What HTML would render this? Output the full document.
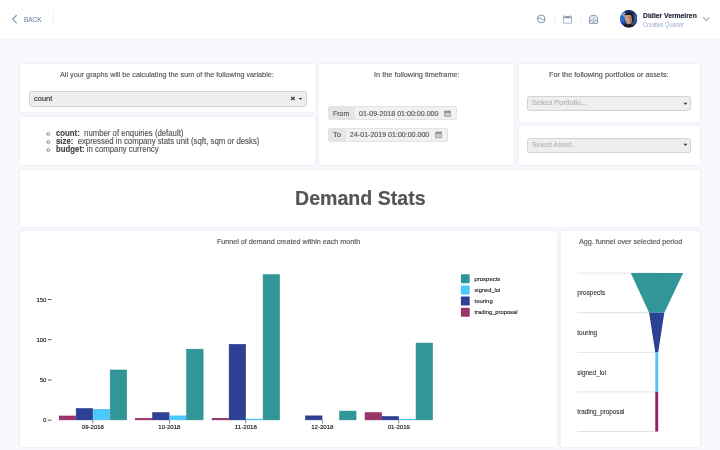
<!DOCTYPE html>
<html><head><meta charset="utf-8">
<style>
*{margin:0;padding:0;box-sizing:border-box}
html,body{width:720px;height:450px;overflow:hidden;background:#f8f9fd;}
body{will-change:transform;-webkit-text-stroke:0.15px currentColor;font-family:"Liberation Sans",sans-serif;color:#555}
.a{position:absolute;white-space:nowrap;transform-origin:0 0}
#hdr{position:absolute;left:0;top:0;width:720px;height:39px;background:#fff;box-shadow:0 0 2px rgba(40,60,90,.06)}
.p{position:absolute;background:#fff;border-radius:2px;box-shadow:0 0 3px rgba(60,70,110,.1)}
.t{font-size:7.4px;color:#555}
.sel{position:absolute;background:#eee;border:0.65px solid #d3d3d3;border-radius:2.5px}
.grp{position:absolute;background:#f1f1f1;border:0.6px solid #e3e3e3;border-radius:2px;overflow:hidden}
.add{position:absolute;left:0;top:0;bottom:0;background:#e5e5e5}
</style></head><body>
<div id="hdr">
  <svg class="a" style="left:11px;top:14px" width="8" height="10" viewBox="0 0 8 10"><path d="M5.7 1.1 L1.6 5.1 L5.7 9.1" fill="none" stroke="#7890a8" stroke-width="1.15"/></svg>
  <div id="tback" class="a" style="left:23.80px;top:16.11px;font-size:7px;color:#7b8fa6;transform:scaleX(0.921)">BACK</div>
  <div class="a" style="left:52.6px;top:11.2px;width:0.7px;height:16.3px;background:#f1f3f6"></div>

  <svg class="a" style="left:536px;top:13.5px" width="11" height="11" viewBox="0 0 11 11"><circle cx="5.25" cy="4.95" r="3.85" fill="none" stroke="#7b8fa6" stroke-width="0.95"/><path d="M1.5 5 C2.8 5 3.4 3.7 4.2 3.7 C5.1 3.7 5.4 6.1 6.3 6.1 C7.2 6.1 7.8 4.9 9 4.9" fill="none" stroke="#7b8fa6" stroke-width="0.9"/></svg>
  <div class="a" style="left:554px;top:14.3px;width:0.6px;height:9.3px;background:#f0f2f5"></div>
  <svg class="a" style="left:562px;top:13.5px" width="11" height="11" viewBox="0 0 11 11"><path d="M1.45 2.6 V9.1 H9.55 V2.6" fill="none" stroke="#9aabbd" stroke-width="0.9"/><rect x="1" y="2.1" width="9" height="2.2" fill="#9aabbd"/><rect x="4" y="2.6" width="3" height="1.3" fill="#6f849c"/><rect x="1.9" y="1.1" width="1.2" height="1.4" fill="#b7c4d2"/><rect x="7.9" y="1.1" width="1.2" height="1.4" fill="#b7c4d2"/></svg>
  <div class="a" style="left:580px;top:14.3px;width:0.6px;height:9.3px;background:#f0f2f5"></div>
  <svg class="a" style="left:588px;top:13.5px" width="11" height="11" viewBox="0 0 11 11"><path d="M2.3 2.4 Q2.6 1.6 3.5 1.6 H7.5 Q8.4 1.6 8.7 2.4 L9.6 5.2 V8.5 Q9.6 9.2 8.9 9.2 H2.1 Q1.4 9.2 1.4 8.5 V5.2 Z" fill="#e9edf2" stroke="#7b8fa6" stroke-width="0.9"/><path d="M1.4 6.6 H3.9 Q4.4 7.8 5.5 7.8 Q6.6 7.8 7.1 6.6 H9.6 V8.5 Q9.6 9.2 8.9 9.2 H2.1 Q1.4 9.2 1.4 8.5Z" fill="#fff" stroke="#7b8fa6" stroke-width="0.9"/><path d="M5.5 3.3 V5.9 M4.5 5 L5.5 6 L6.5 5" fill="none" stroke="#8ea0b4" stroke-width="0.7"/></svg>

  <svg class="a" style="left:619.9px;top:10.4px" width="17.5" height="17.5" viewBox="40 30 375 375">
    <defs><clipPath id="cc"><circle cx="227.5" cy="217.5" r="187.5"/></clipPath>
    <filter id="bl" x="-20%" y="-20%" width="140%" height="140%"><feGaussianBlur stdDeviation="14"/></filter></defs>
    <g clip-path="url(#cc)">
      <rect x="0" y="0" width="500" height="500" fill="#22417c"/>
      <g filter="url(#bl)">
      <ellipse cx="120" cy="140" rx="70" ry="60" fill="#7f9cc2"/>
      <ellipse cx="80" cy="230" rx="60" ry="80" fill="#2a6bd0"/>
      <ellipse cx="100" cy="320" rx="60" ry="40" fill="#1d3fb0"/>
      <ellipse cx="250" cy="60" rx="110" ry="45" fill="#182d5e"/>
      <ellipse cx="370" cy="220" rx="50" ry="90" fill="#2f5a98"/>
      </g>
      <path d="M140 120 Q200 80 290 105 Q330 130 335 200 L330 270 L290 280 L280 150 Z" fill="#241e1c"/>
      <path d="M150 130 Q210 115 272 140 Q292 190 298 250 Q290 310 262 335 L205 338 Q165 300 158 260 Q142 215 145 190 Z" fill="#c8957a"/>
      <path d="M150 150 Q175 140 200 150 L190 260 Q160 250 150 210Z" fill="#d9ac8c" opacity="0.8"/>
      <path d="M152 186 L262 186" stroke="#5a4038" stroke-width="10" opacity="0.5"/>
      <path d="M240 150 Q285 170 296 240 Q290 300 262 335 L240 330 Q270 260 240 150Z" fill="#9c6c58" opacity="0.75"/>
      <path d="M140 125 Q190 85 280 100 Q320 115 320 150 Q270 125 150 140Z" fill="#1e1816"/>
      <path d="M100 420 L130 330 Q200 350 270 330 L340 340 L380 420 Z" fill="#1c1c1f"/>
      <path d="M290 290 L340 320 L330 360 L280 340 Z" fill="#4a5560"/>
    </g>
  </svg>
  <div id="tname" class="a" style="left:643.30px;top:11.21px;font-size:7.2px;font-weight:bold;color:#172030;transform:scaleX(0.941)">Didier Vermeiren</div>
  <div id="tcomp" class="a" style="left:643.30px;top:20.90px;font-size:6.3px;color:#afbfcf;transform:scaleX(0.878)">Creative Quarter</div>
  <svg class="a" style="left:702px;top:16px" width="9" height="6" viewBox="0 0 9 6"><path d="M1.2 1.4 L4.25 4.5 L7.3 1.4" fill="none" stroke="#8fa3b9" stroke-width="1.05"/></svg>
</div>

<!-- row 1 -->
<div class="p" style="left:20px;top:64px;width:294.8px;height:48.4px"></div>
<div id="tall" class="a t" style="left:60.40px;top:69.60px;font-size:7.6px;transform:scaleX(0.952)">All your graphs will be calculating the sum of the following variable:</div>
<div class="sel" style="left:29px;top:91px;width:277.5px;height:16px"></div>
<div id="tcount" class="a" style="left:33.90px;top:93.90px;font-size:7.6px;color:#333;transform:scaleX(0.985)">count</div>
<svg class="a" style="left:290px;top:96px" width="14" height="5" viewBox="0 0 14 5"><path d="M1.1 1.0 L4.6 4.0 M4.6 1.0 L1.1 4.0" stroke="#333" stroke-width="1.05"/><path d="M8.7 1.9 H12.3 L10.5 4.0Z" fill="#333"/></svg>

<div class="p" style="left:20px;top:116.6px;width:294.8px;height:48.8px"></div>
<div id="l1" class="a" style="left:56.20px;top:127.81px;font-size:8.6px;color:#555;transform:scaleX(0.904)"><b style="color:#444">count:</b>&nbsp; number of enquiries (default)</div><div id="l2" class="a" style="left:56.20px;top:135.71px;font-size:8.6px;color:#555;transform:scaleX(0.906)"><b style="color:#444">size:</b>&nbsp; expressed in company stats unit (sqft, sqm or desks)</div><div id="l3" class="a" style="left:56.20px;top:143.71px;font-size:8.6px;color:#555;transform:scaleX(0.907)"><b style="color:#444">budget:</b> in company currency</div>
<svg class="a" style="left:46px;top:128px" width="6" height="26"><g fill="none" stroke="#6a6a6a" stroke-width="0.75"><circle cx="2.3" cy="5.9" r="1.5"/><circle cx="2.3" cy="14" r="1.5"/><circle cx="2.3" cy="22" r="1.5"/></g></svg>

<div class="p" style="left:319.2px;top:64px;width:195.2px;height:101.4px"></div>
<div id="ttime" class="a t" style="left:374.00px;top:70.00px;font-size:7.6px;transform:scaleX(0.966)">In the following timeframe:</div>
<div class="grp" style="left:328.1px;top:106.1px;width:128.6px;height:14.4px"><div class="add" style="width:26.2px"></div></div>
<div id="tfrom" class="a" style="left:333.00px;top:108.51px;font-size:7.4px;color:#555;transform:scaleX(0.937)">From</div>
<div id="tdate1" class="a" style="left:359.20px;top:108.51px;font-size:7.4px;color:#555;transform:scaleX(0.957)">01-09-2018 01:00:00.000</div>
<svg class="a cal" style="left:443.9px;top:110px" width="7.4" height="7.4" viewBox="0 0 8 8"><rect x="0.6" y="1.4" width="6.6" height="5.9" rx="0.6" fill="#c8c8c8" stroke="#8a8a8a" stroke-width="0.7"/><rect x="0.6" y="1.4" width="6.6" height="1.6" fill="#8a8a8a"/><rect x="1.7" y="0.3" width="0.9" height="1.6" fill="#8a8a8a"/><rect x="5.2" y="0.3" width="0.9" height="1.6" fill="#8a8a8a"/></svg>
<div class="grp" style="left:328.1px;top:127.7px;width:119.6px;height:14.6px"><div class="add" style="width:17.4px"></div></div>
<div id="tto" class="a" style="left:333.00px;top:130.11px;font-size:7.4px;color:#555;transform:scaleX(1.039)">To</div>
<div id="tdate2" class="a" style="left:350.20px;top:130.11px;font-size:7.4px;color:#555;transform:scaleX(0.955)">24-01-2019 01:00:00.000</div>
<svg class="a cal" style="left:435.1px;top:131.3px" width="7.4" height="7.4" viewBox="0 0 8 8"><rect x="0.6" y="1.4" width="6.6" height="5.9" rx="0.6" fill="#c8c8c8" stroke="#8a8a8a" stroke-width="0.7"/><rect x="0.6" y="1.4" width="6.6" height="1.6" fill="#8a8a8a"/><rect x="1.7" y="0.3" width="0.9" height="1.6" fill="#8a8a8a"/><rect x="5.2" y="0.3" width="0.9" height="1.6" fill="#8a8a8a"/></svg>

<div class="p" style="left:518.6px;top:64px;width:181.4px;height:57.8px"></div>
<div id="tport" class="a t" style="left:549.00px;top:70.25px;font-size:7.3px;transform:scaleX(1.007)">For the following portfolios or assets:</div>
<div class="sel" style="left:527px;top:96px;width:164px;height:15px"></div>
<div id="tselp" class="a" style="left:531.50px;top:98.40px;font-size:7.4px;color:#b2b2b2;transform:scaleX(0.985)">Select Portfolio...</div>
<svg class="a" style="left:682.5px;top:101.5px" width="5" height="4"><path d="M0.5 0.8 H4.3 L2.4 3Z" fill="#333"/></svg>

<div class="p" style="left:518.6px;top:125.8px;width:181.4px;height:39.6px"></div>
<div class="sel" style="left:527px;top:137.5px;width:164px;height:15px"></div>
<div id="tsela" class="a" style="left:531.50px;top:140.10px;font-size:7.6px;color:#b2b2b2;transform:scaleX(0.936)">Select Asset...</div>
<svg class="a" style="left:682.5px;top:143px" width="5" height="4"><path d="M0.5 0.8 H4.3 L2.4 3Z" fill="#333"/></svg>

<!-- demand stats -->
<div class="p" style="left:20px;top:169.5px;width:680px;height:57.2px"></div>
<div id="tdem" class="a" style="left:294.50px;top:187.01px;font-size:19.8px;font-weight:bold;color:#555;transform:scaleX(0.990)">Demand Stats</div>

<!-- charts -->
<div class="p" style="left:20px;top:231.1px;width:536.8px;height:216.2px"></div>
<div id="tfun" class="a t" style="left:217.00px;top:237.00px;font-size:7.5px;transform:scaleX(0.954)">Funnel of demand created within each month</div>
<div class="p" style="left:561.4px;top:231.1px;width:138.6px;height:216.2px"></div>
<div id="tagg" class="a t" style="left:579.00px;top:237.00px;font-size:7.5px;transform:scaleX(0.960)">Agg. funnel over selected period</div>

<svg id="bars" class="a" style="left:0;top:0" width="720" height="450"><rect x="59.20" y="416.00" width="16.40" height="3.85" fill="#9a3469" stroke="#8d1f5e" stroke-width="0.6"/><rect x="76.20" y="408.60" width="16.40" height="11.25" fill="#2d4194" stroke="#20328a" stroke-width="0.6"/><rect x="93.20" y="409.30" width="16.40" height="10.55" fill="#4dc8fd" stroke="#40bdf2" stroke-width="0.6"/><rect x="110.20" y="370.00" width="16.40" height="49.85" fill="#329698" stroke="#2a8a8a" stroke-width="0.6"/><rect x="92.60" y="420.15" width="0.6" height="3.2" fill="#333"/><text x="92.90" y="429.4" text-anchor="middle" font-size="6.1" fill="#222" stroke="#222" stroke-width="0.15" textLength="22.2" lengthAdjust="spacingAndGlyphs">09-2018</text><rect x="135.67" y="418.40" width="16.40" height="1.45" fill="#9a3469" stroke="#8d1f5e" stroke-width="0.6"/><rect x="152.67" y="412.70" width="16.40" height="7.15" fill="#2d4194" stroke="#20328a" stroke-width="0.6"/><rect x="169.67" y="415.90" width="16.40" height="3.95" fill="#4dc8fd" stroke="#40bdf2" stroke-width="0.6"/><rect x="186.67" y="349.20" width="16.40" height="70.65" fill="#329698" stroke="#2a8a8a" stroke-width="0.6"/><rect x="169.07" y="420.15" width="0.6" height="3.2" fill="#333"/><text x="169.37" y="429.4" text-anchor="middle" font-size="6.1" fill="#222" stroke="#222" stroke-width="0.15" textLength="22.2" lengthAdjust="spacingAndGlyphs">10-2018</text><rect x="212.14" y="418.30" width="16.40" height="1.55" fill="#9a3469" stroke="#8d1f5e" stroke-width="0.6"/><rect x="229.14" y="344.40" width="16.40" height="75.45" fill="#2d4194" stroke="#20328a" stroke-width="0.6"/><rect x="246.14" y="419.10" width="16.40" height="0.75" fill="#4dc8fd" stroke="#40bdf2" stroke-width="0.6"/><rect x="263.14" y="274.70" width="16.40" height="145.15" fill="#329698" stroke="#2a8a8a" stroke-width="0.6"/><rect x="245.54" y="420.15" width="0.6" height="3.2" fill="#333"/><text x="245.84" y="429.4" text-anchor="middle" font-size="6.1" fill="#222" stroke="#222" stroke-width="0.15" textLength="22.2" lengthAdjust="spacingAndGlyphs">11-2018</text><rect x="305.61" y="415.90" width="16.40" height="3.95" fill="#2d4194" stroke="#20328a" stroke-width="0.6"/><rect x="339.61" y="411.10" width="16.40" height="8.75" fill="#329698" stroke="#2a8a8a" stroke-width="0.6"/><rect x="322.01" y="420.15" width="0.6" height="3.2" fill="#333"/><text x="322.31" y="429.4" text-anchor="middle" font-size="6.1" fill="#222" stroke="#222" stroke-width="0.15" textLength="22.2" lengthAdjust="spacingAndGlyphs">12-2018</text><rect x="365.08" y="412.70" width="16.40" height="7.15" fill="#9a3469" stroke="#8d1f5e" stroke-width="0.6"/><rect x="382.08" y="416.60" width="16.40" height="3.25" fill="#2d4194" stroke="#20328a" stroke-width="0.6"/><rect x="399.08" y="419.20" width="16.40" height="0.65" fill="#4dc8fd" stroke="#40bdf2" stroke-width="0.6"/><rect x="416.08" y="343.10" width="16.40" height="76.75" fill="#329698" stroke="#2a8a8a" stroke-width="0.6"/><rect x="398.48" y="420.15" width="0.6" height="3.2" fill="#333"/><text x="398.78" y="429.4" text-anchor="middle" font-size="6.1" fill="#222" stroke="#222" stroke-width="0.15" textLength="22.2" lengthAdjust="spacingAndGlyphs">01-2019</text><rect x="47.9" y="419.75" width="3.4" height="0.8" fill="#333"/><text x="46.4" y="422.25" text-anchor="end" font-size="6.1" fill="#222" stroke="#222" stroke-width="0.15" textLength="3.3" lengthAdjust="spacingAndGlyphs">0</text><rect x="47.9" y="379.55" width="3.4" height="0.8" fill="#333"/><text x="46.4" y="382.05" text-anchor="end" font-size="6.1" fill="#222" stroke="#222" stroke-width="0.15" textLength="6.6" lengthAdjust="spacingAndGlyphs">50</text><rect x="47.9" y="339.35" width="3.4" height="0.8" fill="#333"/><text x="46.4" y="341.85" text-anchor="end" font-size="6.1" fill="#222" stroke="#222" stroke-width="0.15" textLength="10.0" lengthAdjust="spacingAndGlyphs">100</text><rect x="47.9" y="299.15" width="3.4" height="0.8" fill="#333"/><text x="46.4" y="301.65" text-anchor="end" font-size="6.1" fill="#222" stroke="#222" stroke-width="0.15" textLength="10.0" lengthAdjust="spacingAndGlyphs">150</text><rect x="460.9" y="274.30" width="8.8" height="9" rx="0.8" fill="#329698"/><text x="474.5" y="281.00" font-size="6.1" fill="#222" stroke="#222" stroke-width="0.12" textLength="25.8" lengthAdjust="spacingAndGlyphs">prospects</text><rect x="460.9" y="285.43" width="8.8" height="9" rx="0.8" fill="#4dc8fd"/><text x="474.5" y="292.13" font-size="6.1" fill="#222" stroke="#222" stroke-width="0.12" textLength="25.8" lengthAdjust="spacingAndGlyphs">signed_loi</text><rect x="460.9" y="296.56" width="8.8" height="9" rx="0.8" fill="#2d4194"/><text x="474.5" y="303.26" font-size="6.1" fill="#222" stroke="#222" stroke-width="0.12" textLength="18.2" lengthAdjust="spacingAndGlyphs">touring</text><rect x="460.9" y="307.69" width="8.8" height="9" rx="0.8" fill="#9a3469"/><text x="474.5" y="314.39" font-size="6.1" fill="#222" stroke="#222" stroke-width="0.12" textLength="43.0" lengthAdjust="spacingAndGlyphs">trading_proposal</text></svg>
<svg id="funnel" class="a" style="left:0;top:0" width="720" height="450"><rect x="577.4" y="272.65" width="80" height="0.9" fill="#e0e0e0"/><rect x="577.4" y="312.25" width="80" height="0.9" fill="#e0e0e0"/><rect x="577.4" y="351.85" width="80" height="0.9" fill="#e0e0e0"/><rect x="577.4" y="391.45" width="80" height="0.9" fill="#e0e0e0"/><rect x="577.4" y="431.05" width="80" height="0.9" fill="#e0e0e0"/><path d="M630.8 273.1 L683.2 273.1 L664.3 312.7 L649.1 312.7Z" fill="#329698"/><path d="M649.1 312.7 L664.3 312.7 L658.2 352.3 L655.3 352.3Z" fill="#2d4194"/><rect x="655.3" y="352.3" width="2.9" height="39.6" fill="#4dc8fd"/><rect x="655.3" y="391.9" width="2.9" height="39.6" fill="#921f60"/><text x="577.3" y="295.30" font-size="6.5" fill="#333" stroke="#333" stroke-width="0.1" textLength="28.0" lengthAdjust="spacingAndGlyphs">prospects</text><text x="577.3" y="334.90" font-size="6.5" fill="#333" stroke="#333" stroke-width="0.1" textLength="19.9" lengthAdjust="spacingAndGlyphs">touring</text><text x="577.3" y="374.50" font-size="6.5" fill="#333" stroke="#333" stroke-width="0.1" textLength="28.8" lengthAdjust="spacingAndGlyphs">signed_loi</text><text x="577.3" y="414.10" font-size="6.5" fill="#333" stroke="#333" stroke-width="0.1" textLength="47.1" lengthAdjust="spacingAndGlyphs">trading_proposal</text></svg>
</body></html>
